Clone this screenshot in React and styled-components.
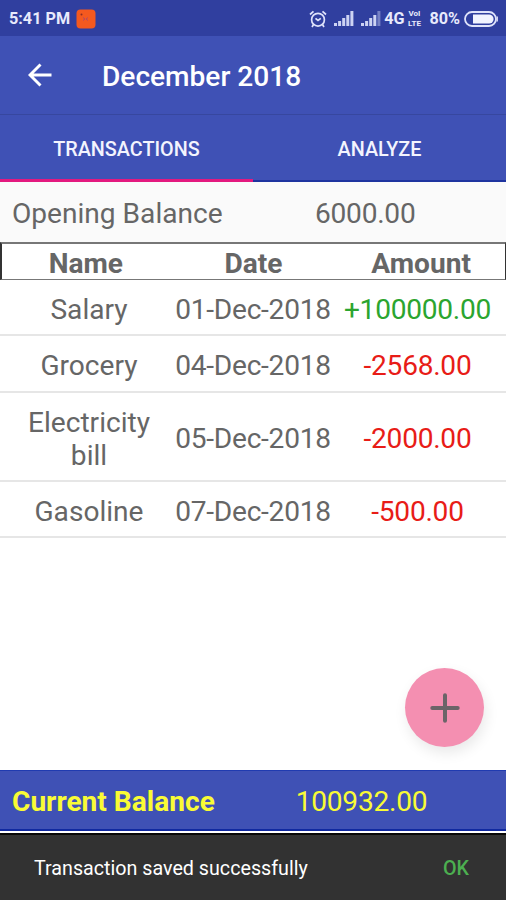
import React from 'react';
import styled, { createGlobalStyle } from 'styled-components';

const GlobalStyle = createGlobalStyle`
  * {
    box-sizing: border-box;
  }

  body {
    margin: 0;
    font-family: Roboto, sans-serif;
    color: #666;
  }
`;

const Screen = styled.div`
  width: 506px;
  height: 900px;
  display: flex;
  flex-direction: column;
  background: #fff;
  overflow: hidden;
`;

const StatusBar = styled.div`
  height: 36px;
  flex-shrink: 0;
  display: flex;
  align-items: center;
  justify-content: space-between;
  padding: 1px 8px 0 9px;
  background: #303f9f;
  color: #e8eafc;
  font-size: 16.2px;
  font-weight: 700;
`;

const StatusGroup = styled.div`
  display: flex;
  align-items: center;
  gap: ${(props) => props.$gap}px;
`;

const AppBar = styled.header`
  height: 79px;
  flex-shrink: 0;
  display: flex;
  align-items: center;
  padding: 3px 28px 0;
  background: #3f51b5;
  border-bottom: 1px solid #37479f;
`;

const BackIcon = styled.svg`
  margin-bottom: 3px;
`;

const Title = styled.h1`
  margin: 0 0 0 50px;
  color: #fff;
  font-size: 28.1px;
  font-weight: 500;
`;

const Tabs = styled.nav`
  height: 67px;
  flex-shrink: 0;
  display: flex;
  background: #3f51b5;
`;

const Tab = styled.div`
  flex: 1;
  display: flex;
  align-items: center;
  justify-content: center;
  padding-top: 4px;
  color: #f3f4fe;
  font-size: 19.8px;
  font-weight: 500;
  border-bottom: ${(props) => (props.$active ? '3px solid #e3197f' : '2px solid #1e349f')};
`;

const Balance = styled.div`
  flex-shrink: 0;
  display: grid;
  grid-template-columns: 1fr 1fr;
  align-items: center;
  font-size: 28.1px;
`;

const OpeningBalance = styled(Balance)`
  height: 60px;
  padding: 3px 23px 0 12px;
  background: #fafafa;
`;

const CurrentBalance = styled(Balance)`
  height: 61px;
  padding: 3px 28px 0 12px;
  background: #3f51b5;
  border-top: 1px solid #203bb0;
  border-bottom: 2px solid #1029a0;
  color: #f9fb35;
`;

const BalanceLabel = styled.span`
  white-space: nowrap;
  font-weight: ${(props) => (props.$bold ? 700 : 400)};
`;

const BalanceValue = styled.span`
  text-align: center;
  letter-spacing: -0.25px;
`;

const TableHead = styled.div`
  height: 38px;
  flex-shrink: 0;
  display: grid;
  grid-template-columns: repeat(3, 1fr);
  align-items: center;
  padding-top: 3px;
  border: solid #777;
  border-width: 2px 1px 1px 2px;
  border-left-color: #333;
  border-right-color: #333;
  font-size: 28.1px;
  font-weight: 700;
  text-align: center;
`;

const Row = styled.div`
  flex-shrink: 0;
  display: grid;
  grid-template-columns: repeat(3, 1fr);
  align-items: center;
  padding: 13px 7px 8.3px;
  border-bottom: 2px solid #e6e6e6;
  font-size: 28.1px;
  line-height: 33px;
  text-align: center;
  white-space: nowrap;
`;

const Name = styled.span`
  padding: 0 14px;
  white-space: normal;
`;

const EntryDate = styled.span`
  letter-spacing: -0.25px;
`;

const Amount = styled.span`
  padding-left: 1px;
  letter-spacing: -0.25px;
  color: ${(props) => (props.$income ? '#2ba52f' : '#e81c17')};
`;

const Body = styled.div`
  flex: 1;
  display: flex;
  justify-content: flex-end;
  align-items: flex-end;
  padding: 0 22px 23px;
`;

const AddButton = styled.button`
  width: 79px;
  height: 79px;
  display: flex;
  align-items: center;
  justify-content: center;
  padding: 0;
  border: 0;
  border-radius: 50%;
  background: #f48fb1;
  box-shadow: 2px 6px 14px rgba(0, 0, 0, 0.09);
`;

const Snackbar = styled.div`
  height: 67px;
  flex-shrink: 0;
  display: flex;
  align-items: center;
  justify-content: space-between;
  margin-top: 2px;
  padding: 1px 37px 0 34px;
  background: #323232;
  border-top: 2px solid #080808;
  color: #fff;
  font-size: 19.7px;
`;

const Action = styled.span`
  color: #4caf50;
  font-weight: 500;
`;

const transactions = [
  { name: 'Salary', date: '01-Dec-2018', amount: '+100000.00' },
  { name: 'Grocery', date: '04-Dec-2018', amount: '-2568.00' },
  { name: 'Electricity bill', date: '05-Dec-2018', amount: '-2000.00' },
  { name: 'Gasoline', date: '07-Dec-2018', amount: '-500.00' },
];

function AppBadge() {
  return (
    <svg width="20" height="20" viewBox="0 0 20 20">
      <rect x="0.5" y="0.5" width="19" height="19" rx="4" fill="#f4591f" />
      <circle cx="5.5" cy="5.5" r="1" fill="#8c2d23" />
      <path d="M7 8.5l2 1.5-2 1.5M12 8.5L10 10l2 1.5" stroke="#b34a62" fill="none" />
    </svg>
  );
}

function AlarmIcon() {
  return (
    <svg width="18" height="18" viewBox="0 0 18 18" fill="none" stroke="#dfe3fb" strokeWidth="1.7">
      <circle cx="9" cy="9.7" r="6.4" />
      <path d="M1 4.5L4.5 1.3M17 4.5L13.5 1.3M4.5 14.5L3 17M13.5 14.5L15 17M6.5 8.3L9 10.5l2.8-2.2" />
    </svg>
  );
}

function SignalIcon({ weak }) {
  return (
    <svg width="20" height="15" viewBox="0 0 20 15" fill="#cdd3f3">
      <rect x="0" y="12" width="3" height="3" />
      <rect x="4.1" y="10" width="3" height="5" />
      <rect x="8.2" y="7" width="3" height="8" />
      <rect x="12.3" y="4" width="3" height="11" />
      <rect x="16.4" y="0" width="3" height="15" opacity={weak ? 0.45 : 1} />
    </svg>
  );
}

const Volte = styled.span`
  display: flex;
  flex-direction: column;
  width: 16px;
  margin: 0 7px 0 2px;
  font-size: 8px;
  line-height: 10px;
  text-align: center;
`;

const Spaced = styled.span`
  margin-left: ${(props) => props.$left || 0}px;
  display: flex;
`;

function BatteryIcon() {
  return (
    <svg width="34" height="16" viewBox="0 0 34 16">
      <rect x="1" y="1" width="31" height="14" rx="7" fill="none" stroke="#dfe3fb" strokeWidth="1.8" />
      <path d="M9 3.4H25a4.6 4.6 0 0 1 0 9.2H9z" fill="#f1f3ff" />
      <path d="M33.2 5.5v5" stroke="#dfe3fb" strokeWidth="1.4" />
    </svg>
  );
}

function App() {
  return (
    <>
      <GlobalStyle />
      <Screen>
        <StatusBar>
          <StatusGroup $gap={6}>
            <span>5:41 PM</span>
            <AppBadge />
          </StatusGroup>
          <StatusGroup $gap={0}>
            <AlarmIcon />
            <Spaced $left={7}><SignalIcon /></Spaced>
            <Spaced $left={7}><SignalIcon weak /></Spaced>
            <Spaced $left={3}>4G</Spaced>
            <Volte>
              <span>VoI</span>
              <span>LTE</span>
            </Volte>
            <span>80%</span>
            <Spaced $left={4}><BatteryIcon /></Spaced>
          </StatusGroup>
        </StatusBar>
        <AppBar>
          <BackIcon width="24" height="24" viewBox="0 0 24 24" fill="none" stroke="#fff" strokeWidth="2.9">
            <path d="M23.5 12H3M12.5 1.5L2 12l10.5 10.5" />
          </BackIcon>
          <Title>December 2018</Title>
        </AppBar>
        <Tabs>
          <Tab $active>TRANSACTIONS</Tab>
          <Tab>ANALYZE</Tab>
        </Tabs>
        <OpeningBalance>
          <BalanceLabel>Opening Balance</BalanceLabel>
          <BalanceValue>6000.00</BalanceValue>
        </OpeningBalance>
        <TableHead>
          <span>Name</span>
          <span>Date</span>
          <span>Amount</span>
        </TableHead>
        {transactions.map((item) => (
          <Row key={item.name}>
            <Name>{item.name}</Name>
            <EntryDate>{item.date}</EntryDate>
            <Amount $income={item.amount.startsWith('+')}>{item.amount}</Amount>
          </Row>
        ))}
        <Body>
          <AddButton aria-label="Add transaction">
            <svg width="30" height="30" viewBox="0 0 30 30" stroke="#6b6468" strokeWidth="4" strokeLinecap="round">
              <path d="M15 2.3v25.4M2.3 15h25.4" />
            </svg>
          </AddButton>
        </Body>
        <CurrentBalance>
          <BalanceLabel $bold>Current Balance</BalanceLabel>
          <BalanceValue>100932.00</BalanceValue>
        </CurrentBalance>
        <Snackbar>
          <span>Transaction saved successfully</span>
          <Action>OK</Action>
        </Snackbar>
      </Screen>
    </>
  );
}

export default App;
